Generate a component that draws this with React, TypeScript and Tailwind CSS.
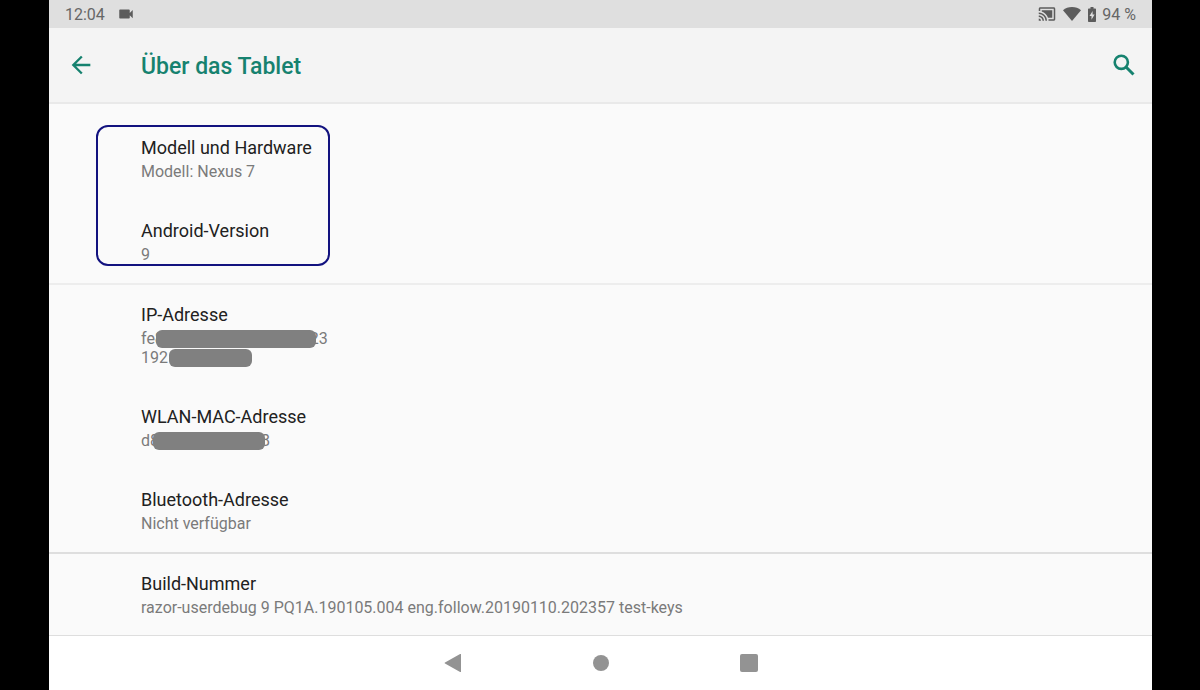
import type { ReactNode } from 'react'
import { MdArrowBack, MdVideocam, MdCastConnected } from 'react-icons/md'

interface Entry {
  title: string
  lines: ReactNode[]
}

const deviceEntries: Entry[] = [
  { title: 'Modell und Hardware', lines: ['Modell: Nexus 7'] },
  { title: 'Android-Version', lines: ['9'] },
]

const networkEntries: Entry[] = [
  {
    title: 'IP-Adresse',
    lines: [
      <Redacted key="v6" before="fe8" after="23" className="-ml-2 -mr-1.5 w-40" />,
      <Redacted key="v4" before="192" after="" className="ml-px w-[83px]" />,
    ],
  },
  {
    title: 'WLAN-MAC-Adresse',
    lines: [<Redacted key="mac" before="d8" after="8" className="-ml-1.5 -mr-1 w-28" />],
  },
  { title: 'Bluetooth-Adresse', lines: ['Nicht verfügbar'] },
]

const buildEntries: Entry[] = [
  {
    title: 'Build-Nummer',
    lines: ['razor-userdebug 9 PQ1A.190105.004 eng.follow.20190110.202357 test-keys'],
  },
]

// Text with its middle part covered by a grey bar
function Redacted({ before, after, className }: { before: string; after: string; className: string }) {
  return (
    <span className="flex items-center">
      {before}
      <span className={`relative h-[18px] shrink-0 rounded-md bg-[#808080] ${className}`} />
      {after}
    </span>
  )
}

function EntryList({ entries }: { entries: Entry[] }) {
  return (
    <ul>
      {entries.map((entry) => (
        <li key={entry.title} className="pt-[18px] pr-4 pb-5 pl-[92px]">
          <h2 className="mb-0.5 text-[18px] leading-6 text-[#212121]">{entry.title}</h2>
          {entry.lines.map((line, i) => (
            <div key={i} className="text-[16px] leading-[19px] text-[#7a7a7a]">
              {line}
            </div>
          ))}
        </li>
      ))}
    </ul>
  )
}

function StatusBar() {
  return (
    <div className="flex h-7 shrink-0 items-center justify-between bg-[#dfdfdf] px-4 pt-0.5 text-[16px] text-[#666666]">
      <div className="flex items-center gap-3">
        <span>12:04</span>
        <MdVideocam className="mb-0.5 size-[18px] text-[#5c5c5c]" />
      </div>
      <div className="flex items-center">
        <MdCastConnected className="mb-0.5 size-[18px] text-[#5c5c5c]" />
        <svg viewBox="0 0 18 14" className="mx-[7px] mb-0.5 h-[14px] w-[18px] fill-[#5c5c5c]">
          <path d="M9 14 0 3.2C2.400 1.200 5.500 0 9 0s6.600 1.200 9 3.200z" />
        </svg>
        <svg viewBox="0 0 8 15" className="mr-1.5 mb-0.5 h-[15px] w-2 fill-[#5c5c5c]">
          <path
            fillRule="evenodd"
            d="M2.500 0h3v1.500h1.700a.8.8 0 0 1 .8.8v11.900a.8.8 0 0 1-.8.800H.8a.8.8 0 0 1-.8-.8V2.300a.8.8 0 0 1 .8-.8h1.700zM4.600 4 1.500 9h2v3.700L6.600 7.600h-2z"
          />
        </svg>
        <span>94 %</span>
      </div>
    </div>
  )
}

function NavigationBar() {
  return (
    <nav className="flex h-[55px] shrink-0 items-center justify-center border-t border-[#dedede] bg-white">
      <button aria-label="Zurück" className="flex h-full w-[148px] items-center justify-center">
        <svg viewBox="0 0 18 18" className="size-[18px] fill-[#939393]">
          <path d="M17 .6v16.800a.6.6 0 0 1-.9.500L1 9.500a.6.6 0 0 1 0-1L16.100.1a.6.6 0 0 1 .9.500z" />
        </svg>
      </button>
      <button aria-label="Startbildschirm" className="flex h-full w-[148px] items-center justify-center">
        <span className="size-4 rounded-full bg-[#939393]" />
      </button>
      <button aria-label="Letzte Apps" className="flex h-full w-[148px] items-center justify-center">
        <span className="size-[18px] rounded-[2px] bg-[#939393]" />
      </button>
    </nav>
  )
}

export default function App() {
  return (
    <div className="flex h-screen bg-black pr-12 pl-[49px] font-['Roboto',sans-serif]">
      <div className="flex min-w-0 flex-1 flex-col bg-[#fafafa]">
        <StatusBar />
        <header className="flex h-[76px] shrink-0 items-center border-b-2 border-[#e9e9e9] bg-[#f4f4f4] px-4">
          <button aria-label="Nach oben" className="flex size-8 items-center justify-center text-[#16826f]">
            <MdArrowBack className="size-7" />
          </button>
          <h1 className="ml-11 flex-1 pt-1 text-[23px] font-medium text-[#16826f]">Über das Tablet</h1>
          <button aria-label="Suchen" className="-mr-1 flex size-8 items-center justify-center">
            <svg viewBox="0 0 28 28" className="size-7 fill-none stroke-[#16826f]">
              <circle cx="11.300" cy="11.300" r="6.600" strokeWidth="2.600" />
              <path d="m16 16 7.500 7.500" strokeWidth="3" />
            </svg>
          </button>
        </header>
        <main className="min-h-0 flex-1 overflow-hidden">
          <section className="relative pt-3.5">
            <EntryList entries={deviceEntries} />
            <div className="pointer-events-none absolute top-[21px] left-[47px] h-[141px] w-[234px] rounded-xl border-2 border-[#12127f]" />
          </section>
          <section className="border-t border-[#ededed] shadow-[0_-1px_0_#ededed]">
            <EntryList entries={networkEntries} />
          </section>
          <section className="border-t border-[#dedede] shadow-[0_-1px_0_#dedede]">
            <EntryList entries={buildEntries} />
          </section>
        </main>
        <NavigationBar />
      </div>
    </div>
  )
}
